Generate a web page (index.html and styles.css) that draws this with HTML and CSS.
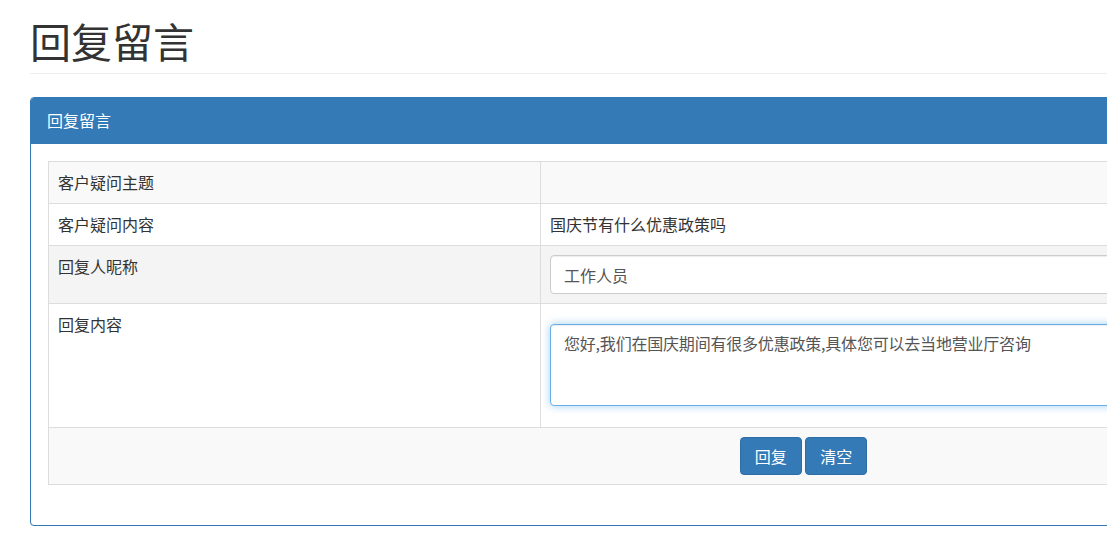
FILE: index.html
```html
<!DOCTYPE html>
<html lang="zh-CN">
<head>
<meta charset="utf-8">
<title>回复留言</title>
<link rel="stylesheet" href="styles.css">
</head>
<body>
<div class="container">
  <div class="page-header">
    <h1 class="title">回复留言</h1>
  </div>
  <div class="panel">
    <div class="panel-heading">回复留言</div>
    <div class="panel-body">
      <table class="grid">
        <colgroup>
          <col class="col-label">
          <col>
        </colgroup>
        <tbody>
          <tr class="row-striped">
            <td>客户疑问主题</td>
            <td></td>
          </tr>
          <tr>
            <td>客户疑问内容</td>
            <td>国庆节有什么优惠政策吗</td>
          </tr>
          <tr class="row-hover">
            <td>回复人昵称</td>
            <td><input class="field" type="text" value="工作人员"></td>
          </tr>
          <tr>
            <td>回复内容</td>
            <td><textarea class="field area">您好,我们在国庆期间有很多优惠政策,具体您可以去当地营业厅咨询</textarea></td>
          </tr>
          <tr class="row-striped">
            <td colspan="2" class="actions">
              <button class="btn" type="button">回复</button>
              <button class="btn" type="button">清空</button>
            </td>
          </tr>
        </tbody>
      </table>
    </div>
  </div>
</div>
</body>
</html>
```

FILE: styles.css
```css
html, body {
  margin: 0;
  padding: 0;
  background: #fff;
  overflow: hidden;
}
body {
  font-family: "Microsoft YaHei", "Noto Sans CJK SC", "Noto Sans", sans-serif;
  font-size: 16px;
  line-height: 23px;
  color: #333;
}
.container {
  padding: 0 30px;
  width: 1547px;
}
.page-header {
  margin: 0 0 23px;
  padding-bottom: 10px;
  border-bottom: 1px solid #eee;
}
.title {
  margin: 0;
  padding-top: 18px;
  font-size: 41px;
  line-height: 45px;
  font-weight: 400;
  color: #333;
}
.panel {
  border: 1px solid #337ab7;
  border-radius: 4px;
  background: #fff;
  box-shadow: 0 1px 1px rgba(0,0,0,.05);
}
.panel-heading {
  background: #337ab7;
  color: #fff;
  padding: 11px 16px 12px;
  line-height: 23px;
  border-radius: 3px 3px 0 0;
}
.panel-body {
  padding: 17px 17px;
}
.grid {
  width: 100%;
  border-collapse: collapse;
  border: 1px solid #ddd;
  margin-bottom: 23px;
}
.col-label {
  width: 492px;
}
.grid td {
  border: 1px solid #ddd;
  padding: 9px 9px;
  vertical-align: top;
  line-height: 23px;
}
.row-striped {
  background: #f9f9f9;
}
.row-hover {
  background: #f4f4f4;
}
.field {
  display: block;
  box-sizing: border-box;
  width: 100%;
  height: 39px;
  margin: 0;
  padding: 7px 13px;
  font-family: inherit;
  font-size: 16px;
  line-height: 23px;
  color: #555;
  background: #fff;
  border: 1px solid #ccc;
  border-radius: 4px;
  box-shadow: inset 0 1px 1px rgba(0,0,0,.075);
}
.area {
  height: 82px;
  margin: 11px 0 12px;
  resize: none;
  letter-spacing: -0.2px;
  border-color: #66afe9;
  box-shadow: inset 0 1px 1px rgba(0,0,0,.075), 0 0 8px rgba(102,175,233,.6);
  outline: 0;
}
.actions {
  text-align: center;
}
.btn {
  display: inline-block;
  margin: 0;
  height: 38px;
  padding: 6px 14px;
  font-family: inherit;
  font-size: 16px;
  line-height: 23px;
  color: #fff;
  background: #337ab7;
  border: 1px solid #2e6da4;
  border-radius: 4px;
  vertical-align: middle;
}
```
